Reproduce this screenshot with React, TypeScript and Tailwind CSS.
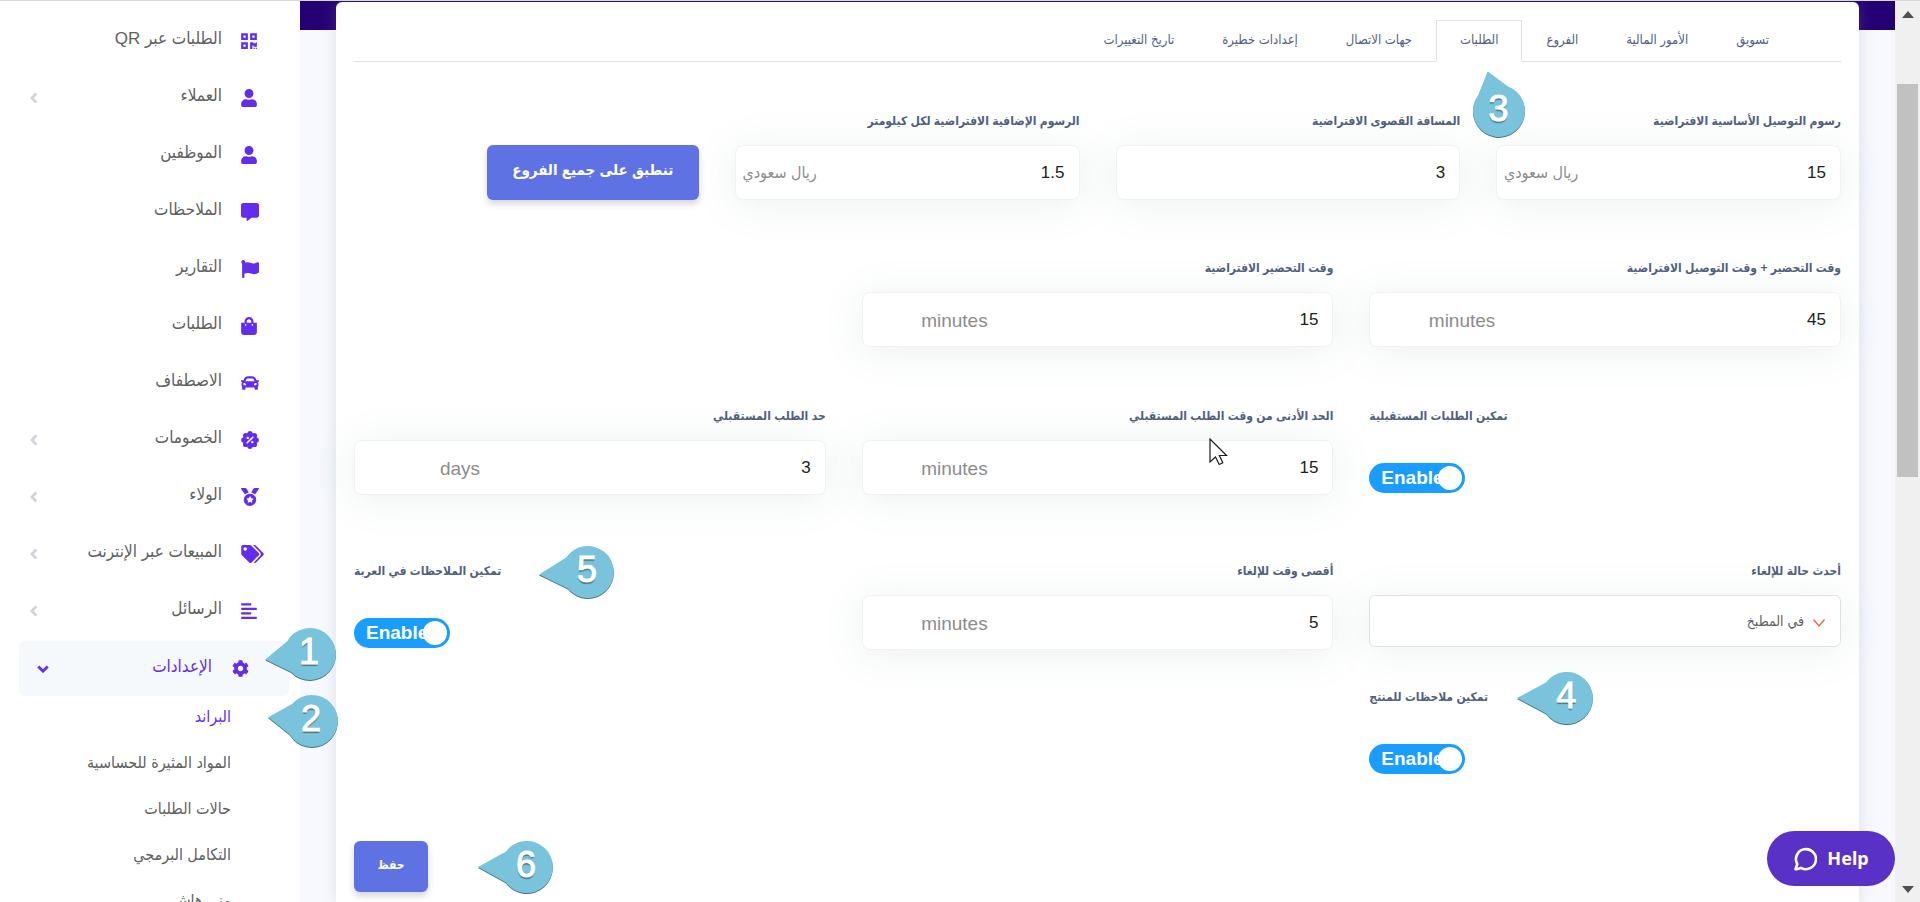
import type { ReactNode } from "react"
import {
  FaAlignLeft,
  FaCar,
  FaCog,
  FaCommentAlt,
  FaFlag,
  FaMedal,
  FaQrcode,
  FaShoppingBag,
  FaTags,
  FaUser,
} from "react-icons/fa"

/* ---------- ICONS ---------- */

function DiscountIcon() {
  const lobes = [0, 1, 2, 3, 4, 5, 6, 7]
  return (
    <svg viewBox="0 0 18 18" className="size-[18px]" aria-hidden="true">
      <circle cx="9" cy="9" r="7.2" fill="currentColor" />
      {lobes.map((i) => (
        <circle
          key={i}
          cx={9 + 6.3 * Math.cos((i * Math.PI) / 4)}
          cy={9 + 6.3 * Math.sin((i * Math.PI) / 4)}
          r="2.6"
          fill="currentColor"
        />
      ))}
      <path d="M6.2 11.8l5.6-5.6" stroke="#fff" strokeWidth="1.5" strokeLinecap="round" />
      <circle cx="6.7" cy="6.9" r="1.2" fill="#fff" />
      <circle cx="11.3" cy="11.1" r="1.2" fill="#fff" />
    </svg>
  )
}

function ChevronLeft() {
  return (
    <svg viewBox="0 0 8 12" className="h-3 w-2 text-[#ced4da]" fill="none" aria-hidden="true">
      <path d="M6.300 1.400L1.900 6l4.400 4.600" stroke="currentColor" strokeWidth="2.800" />
    </svg>
  )
}

function ChevronDown() {
  return (
    <svg viewBox="0 0 12 8" className="h-2 w-3" fill="none" aria-hidden="true">
      <path d="M1.300 1.500L6 6.200l4.700-4.700" stroke="currentColor" strokeWidth="2.800" />
    </svg>
  )
}

// Numbered teardrop; angle turns the tip clockwise from pointing left
function Marker({
  n,
  angle,
  tip = 49,
  className,
}: {
  n: number
  angle: number
  tip?: number
  className: string
}) {
  return (
    <span className={`absolute z-20 block size-[52px] pointer-events-none ${className}`}>
      <svg
        viewBox="-26 -26 52 52"
        className="size-full overflow-visible drop-shadow-[0_1px_0_#4b7582]"
        aria-hidden="true"
      >
        <path
          d={`M${-tip} 0L-21 -15.5A26 26 0 1 1 -21 15.5Z`}
          fill="#79c3dc"
          transform={`rotate(${angle})`}
        />
      </svg>
      <span
        dir="ltr"
        className="absolute inset-0 flex items-center justify-center text-[36px] leading-none text-white pb-1 pr-[2px] [-webkit-text-stroke:1px_#fff] [text-shadow:0_2px_1px_#4b7582]"
      >
        {n}
      </span>
    </span>
  )
}

function Cursor() {
  return (
    <svg
      viewBox="0 0 19 28"
      className="absolute z-20 w-[19px] h-[28px] right-[105px] top-[34px] pointer-events-none"
      aria-hidden="true"
    >
      <path
        d="M1 1v23l5.5-5 3.7 7.5 3.6-1.7-3.4-7.3h7.2z"
        fill="#fff"
        stroke="#1a1a24"
        strokeWidth="1.2"
      />
    </svg>
  )
}

/* ---------- SIDEBAR ---------- */

const navItems = [
  { label: "الطلبات عبر QR", icon: <FaQrcode className="w-4 h-[18px]" />, more: false },
  { label: "العملاء", icon: <FaUser className="w-4 h-[18px]" />, more: true },
  { label: "الموظفين", icon: <FaUser className="w-4 h-[18px]" />, more: false },
  { label: "الملاحظات", icon: <FaCommentAlt className="size-[18px]" />, more: false },
  { label: "التقارير", icon: <FaFlag className="size-[18px]" />, more: false },
  { label: "الطلبات", icon: <FaShoppingBag className="w-4 h-[18px]" />, more: false },
  { label: "الاصطفاف", icon: <FaCar className="size-[18px]" />, more: false },
  { label: "الخصومات", icon: <DiscountIcon />, more: true },
  { label: "الولاء", icon: <FaMedal className="size-[18px]" />, more: true },
  { label: "المبيعات عبر الإنترنت", icon: <FaTags className="w-[23px] h-[18px]" />, more: true },
  { label: "الرسائل", icon: <FaAlignLeft className="w-4 h-[18px]" />, more: true },
]

const subItems = [
  "البراند",
  "المواد المثيرة للحساسية",
  "حالات الطلبات",
  "التكامل البرمجي",
  "مني هاش",
]

function Sidebar() {
  return (
    <nav className="relative z-10 w-[300px] shrink-0 bg-white pt-3">
      <ul className="flex flex-col gap-[2px]">
        {navItems.map((item) => (
          <li key={item.label}>
            <a href="#" className="flex h-[55px] items-center pl-[30px] pr-[35px] text-[17px] text-[#606060]">
              <span className="w-6 shrink-0 flex ml-[19px] justify-end text-[#632dee]">{item.icon}</span>
              <span className="flex-1 pb-1">{item.label}</span>
              {item.more && <ChevronLeft />}
            </a>
          </li>
        ))}
        <li className="pt-px">
          <a
            href="#"
            className="relative flex h-[55px] ml-[19px] mr-[11px] items-center rounded-md bg-[#f5f9fc] pl-[18px] pr-10 text-[17px] text-[#632dee]"
          >
            <FaCog className="size-[17px] ml-5" />
            <span className="flex-1 pb-1">الإعدادات</span>
            <ChevronDown />
            <Marker n={1} angle={-7} tip={45} className="left-[265px] top-[-13px]" />
          </a>
          <ul>
            {subItems.map((label, i) => (
              <li key={label} className="relative">
                <a
                  href="#"
                  className={`flex h-[46px] items-center pr-[69px] pb-1 text-[16px] ${
                    i === 0 ? "text-[#632dee]" : "text-[#606060]"
                  }`}
                >
                  {label}
                </a>
                {i === 0 && <Marker n={2} angle={5} tip={44} className="left-[286px] top-[-1px]" />}
              </li>
            ))}
          </ul>
        </li>
      </ul>
    </nav>
  )
}

/* ---------- FORM PIECES ---------- */

const boxClass =
  "w-full rounded-lg border border-[#eff1f3] bg-white shadow-[0_4px_40px_rgba(100,130,130,0.12)] outline-none"
const labelClass = "block h-6 mb-3 text-[12px] leading-6 font-bold text-[#525f7f]"

function Field({
  id,
  label,
  value,
  unit,
  children,
}: {
  id: string
  label: string
  value: string
  unit?: string
  children?: ReactNode
}) {
  const currency = unit === "ريال سعودي"
  return (
    <div className="relative">
      <label htmlFor={id} className={labelClass}>
        {label}
      </label>
      <div className="relative">
        <input
          id={id}
          type="text"
          defaultValue={value}
          className={`${boxClass} h-[55px] px-[14px] text-[17px] text-[#222]`}
        />
        {unit && (
          <span
            className={`absolute left-0 inset-y-0 flex items-center text-[#8c8c8c] pointer-events-none ${
              currency ? "w-[82px] text-[16px]" : "w-[126px] pt-1 text-[19px]"
            }`}
          >
            {unit}
          </span>
        )}
      </div>
      {children}
    </div>
  )
}

// Switch sits at the left end of its column
function Toggle({ id, label, children }: { id: string; label: string; children?: ReactNode }) {
  return (
    <div className="relative flex flex-col items-end">
      <label htmlFor={id} className="block h-6 mb-[35px] text-[12px] leading-6 font-bold text-[#525f7f]">
        {label}
      </label>
      <span dir="ltr" className="relative block w-24 h-[30px] rounded-full bg-[#199eff]">
        <input
          id={id}
          type="checkbox"
          defaultChecked
          className="absolute inset-0 size-full appearance-none cursor-pointer rounded-full"
        />
        <span className="block pl-3 text-[19px] leading-[29px] font-bold text-white pointer-events-none">
          Enable
        </span>
        <span className="absolute right-[3px] top-[3px] size-6 rounded-full bg-white pointer-events-none" />
      </span>
      {children}
    </div>
  )
}

/* ---------- TABS ---------- */

const tabs = [
  "تسويق",
  "الأمور المالية",
  "الفروع",
  "الطلبات",
  "جهات الاتصال",
  "إعدادات خطيرة",
  "تاريخ التغييرات",
]

function Tabs() {
  return (
    <div role="tablist" className="flex border-b border-[#dee2e6] pr-12">
      {tabs.map((tab) => {
        const active = tab === "الطلبات"
        return (
          <button
            key={tab}
            type="button"
            role="tab"
            aria-selected={active}
            className={`relative h-[42px] -mb-px border px-[23px] pb-[2px] text-[13px] text-[#525f7f] ${
              active ? "border-[#dee2e6] border-b-white bg-white" : "border-transparent"
            }`}
          >
            {tab}
            {active && <Marker n={3} angle={74} tip={41} className="right-[-4px] top-[64px]" />}
          </button>
        )
      })}
    </div>
  )
}

/* ---------- PAGE ---------- */

export default function App() {
  return (
    <div
      dir="ltr"
      className="flex h-screen overflow-hidden border-t border-[#d9d9d9] bg-white [font-family:'Liberation_Sans','DejaVu_Sans_Condensed','DejaVu_Sans',sans-serif]"
    >
      <div dir="rtl" className="contents">
        <Sidebar />
      </div>

      <main
        dir="rtl"
        className="relative min-w-0 flex-1 bg-[linear-gradient(#250073_29px,#f8f9fe_29px)] px-9 pt-px"
      >
        <form
          className="min-h-full rounded-t-md bg-white px-[18px] pt-[18px] shadow-[0_0_16px_rgba(136,152,170,0.25)]"
          onSubmit={(e) => e.preventDefault()}
        >
          <Tabs />

          <div className="grid grid-cols-4 gap-x-9 mt-[47px]">
            <Field id="base-fee" label="رسوم التوصيل الأساسية الافتراضية" value="15" unit="ريال سعودي" />
            <Field id="max-distance" label="المسافة القصوى الافتراضية" value="3" />
            <Field id="km-fee" label="الرسوم الإضافية الافتراضية لكل كيلومتر" value="1.5" unit="ريال سعودي" />
            <div className="pt-9">
              <button
                type="button"
                className="h-[55px] w-[212px] rounded-md bg-[#5e72e4] pb-1 text-[15px] font-bold text-white shadow-[0_4px_6px_rgba(50,50,93,0.2)]"
              >
                تنطبق على جميع الفروع
              </button>
            </div>
          </div>

          <div className="grid grid-cols-3 gap-x-9 mt-14">
            <Field id="total-time" label="وقت التحضير + وقت التوصيل الافتراضية" value="45" unit="minutes" />
            <Field id="prep-time" label="وقت التحضير الافتراضية" value="15" unit="minutes" />
          </div>

          <div className="grid grid-cols-3 gap-x-9 mt-[57px]">
            <Toggle id="future-orders" label="تمكين الطلبات المستقبلية" />
            <Field id="future-min" label="الحد الأدنى من وقت الطلب المستقبلي" value="15" unit="minutes">
              <Cursor />
            </Field>
            <Field id="future-limit" label="حد الطلب المستقبلي" value="3" unit="days" />
          </div>

          <div className="grid grid-cols-3 gap-x-9 mt-16">
            <div>
              <label htmlFor="cancel-status" className={labelClass}>
                أحدث حالة للإلغاء
              </label>
              <div className="relative">
                <select
                  id="cancel-status"
                  className="h-[52px] w-full appearance-none rounded-md border border-[#dee2e6] bg-white pr-9 text-[14px] text-[#606060] shadow-[0_4px_40px_rgba(100,130,130,0.12)]"
                >
                  <option>في المطبخ</option>
                </select>
                <svg
                  viewBox="0 0 12 8"
                  className="absolute right-4 top-6 h-2 w-3 pointer-events-none"
                  aria-hidden="true"
                >
                  <path d="M0.5 0.5L6 7l5.5-6.5" fill="none" stroke="#f2662f" strokeWidth="1.3" />
                </svg>
              </div>
            </div>
            <Field id="cancel-time" label="أقصى وقت للإلغاء" value="5" unit="minutes" />
            <Toggle id="cart-notes" label="تمكين الملاحظات في العربة">
              <Marker n={5} angle={-3} className="left-[208px] top-[-13px]" />
            </Toggle>
          </div>

          <div className="grid grid-cols-3 gap-x-9 mt-[35px]">
            <Toggle id="product-notes" label="تمكين ملاحظات للمنتج">
              <Marker n={4} angle={0} tip={50} className="left-[172px] top-[-13px]" />
            </Toggle>
          </div>

          <div className="relative mt-[67px] flex justify-end">
            <button
              type="submit"
              className="h-[51px] w-[74px] rounded-md bg-[#5e72e4] pb-1 text-[12px] font-bold text-white shadow-[0_4px_6px_rgba(50,50,93,0.2)]"
            >
              حفظ
            </button>
            <Marker n={6} angle={0} className="left-[147px] top-0" />
          </div>
        </form>

        <button
          type="button"
          dir="ltr"
          className="absolute bottom-4 right-0 flex h-[55px] w-32 items-center justify-center gap-[10px] rounded-full bg-[#5a31c6] text-[18px] font-bold text-white [font-family:'Noto_Sans',sans-serif]"
        >
          <svg viewBox="0 0 24 24" className="size-6" fill="none" aria-hidden="true">
            <path
              d="M2.5 22.2l1.8-5.1A10 10 0 1 1 8 20.8c-1.600.9-3.600 1.300-5.500 1.400z"
              stroke="#fff"
              strokeWidth="2.600"
              strokeLinejoin="round"
            />
          </svg>
          Help
        </button>
      </main>

      {/* page scroll track */}
      <div className="flex w-[25px] shrink-0 flex-col items-center justify-between bg-[#f0f0f0] px-[2px] pt-[10px] pb-[9px]">
        <svg viewBox="0 0 12 7" className="h-[7px] w-3 shrink-0" aria-hidden="true">
          <path d="M0 7l6-7 6 7z" fill="#505050" />
        </svg>
        <div className="w-full flex-1 pt-[66px]">
          <div className="h-[393px] bg-[#c1c1c1]" />
        </div>
        <svg viewBox="0 0 12 7" className="h-[7px] w-3 shrink-0" aria-hidden="true">
          <path d="M0 0l6 7 6-7z" fill="#505050" />
        </svg>
      </div>
    </div>
  )
}
